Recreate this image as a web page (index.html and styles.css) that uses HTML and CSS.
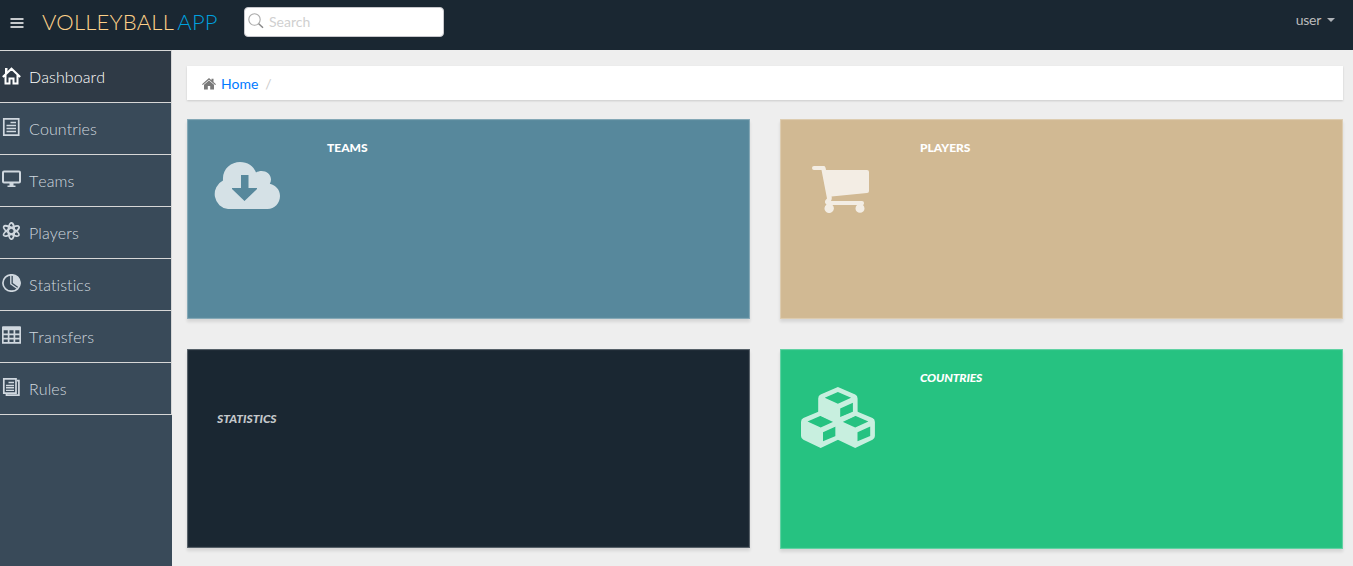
FILE: index.html
```html
<!DOCTYPE html>
<html lang="en">
<head>
<meta charset="utf-8">
<title>Volleyball App</title>
<link rel="stylesheet" href="styles.css">
</head>
<body>
<header class="header">
  <svg class="toggle" viewBox="0 0 14 10"><path d="M0.5 1h13M0.5 5h13M0.5 9h13"/></svg>
  <a class="logo">VOLLEYBALL <span class="logo-accent">APP</span></a>
  <div class="search">
    <svg class="search-icon" viewBox="0 0 16 16"><circle cx="6.500" cy="6.500" r="5.700"/><path class="handle" d="M10.700 10.700l4.300 4"/></svg>
    <span class="placeholder">Search</span>
  </div>
  <div class="user"><span class="user-name">user</span><span class="caret"></span></div>
</header>
<div class="layout">
  <nav class="sidebar">
    <ul class="menu">
      <li class="item active">
        <svg class="icon" viewBox="0 0 19 18"><path class="line thick" d="M.8 10L9.500 1.700 18.200 10M3.500 8v8.500h4v-5h4v5h4V8"/><path d="M3 1h2.500v4L3 7.500z"/></svg>
        <span>Dashboard</span></li>
      <li class="item">
        <svg class="icon" viewBox="0 0 19 18"><path class="line" d="M1.800 .9h14.900v16.200H1.800z"/><path class="line slim" d="M8.500 4.500H14M4.500 7.500H14M4.500 10.500H14M4.500 13.500H14"/></svg>
        <span>Countries</span></li>
      <li class="item">
        <svg class="icon" viewBox="0 0 19 18"><rect class="line thick" x="1" y="1.500" width="17" height="11" rx="1"/><path d="M7.500 13h4v2.500h2V17h-8v-1.500h2z"/></svg>
        <span>Teams</span></li>
      <li class="item">
        <svg class="icon" viewBox="0 0 19 18"><g class="line"><ellipse cx="9.300" cy="9" rx="3" ry="8.200"/><ellipse cx="9.300" cy="9" rx="3" ry="8.800" transform="rotate(60 9.300 9)"/><ellipse cx="9.300" cy="9" rx="3" ry="8.800" transform="rotate(-60 9.300 9)"/></g></svg>
        <span>Players</span></li>
      <li class="item">
        <svg class="icon" viewBox="0 0 19 18"><ellipse class="line" cx="9.500" cy="9" rx="8.600" ry="8.200"/><path d="M10.800 .8A8.600 8.200 0 0 1 17 13.500L10.800 9z"/><path class="line slim" d="M8.800 1v9l6.800 4.800"/></svg>
        <span>Statistics</span></li>
      <li class="item">
        <svg class="icon" viewBox="0 0 19 18"><path d="M1 .3h17a1 1 0 0 1 1 1V4.200H0V1.300a1 1 0 0 1 1-1z"/><path class="line" d="M.8 3v13.900h17.400V3M6.600 4v13M12.400 4v13M1 8.300h17M1 12.600h17"/></svg>
        <span>Transfers</span></li>
      <li class="item">
        <svg class="icon" viewBox="0 0 19 18"><path class="line" d="M1.800 .8h12.200v14.400H1.800zM15 2.700h1.900v14.500H4.500V15.500"/><path class="line slim" d="M6.500 4.500h5.500M4 7.500h8M4 9.700h8M4 12.400h8"/></svg>
        <span>Rules</span></li>
    </ul>
  </nav>
  <main class="main">
    <div class="breadcrumb">
      <svg class="home" viewBox="0 0 14 12"><path d="M7 0l2.500 2.200V.8h2v3.100L14 6.200l-.8.800L7 1.700.8 7 0 6.200z"/><path d="M7 2.500L12 6.800v4.700H8.200V8H5.800v3.500H2V6.800z"/></svg>
      <a class="crumb">Home</a><span class="slash">/</span>
    </div>
    <div class="cards">
      <section class="card teams">
        <svg class="cloud" viewBox="0 0 66 47"><path fill-rule="evenodd" d="M14 47A14.500 15 0 0 1 9 18.500C8 7 17 0 26 0c7.500 0 13.500 4 16 10.500C48 6.800 57 10 57 17.500c0 1.500-.4 3-1.200 4.200C62 23 66 28 66 34c0 7-5.500 13-12.500 13zM27 13v13h-9v1l12.500 12L43 27v-1h-8.500V13z"/></svg>
        <span class="title">Teams</span>
      </section>
      <section class="card players">
        <svg class="cart" viewBox="0 0 57 47"><path d="M2 0h10q1.500 0 2 4h41q2 0 2 2v19q0 1.800-2 2L19.500 30.500q.8 2-.5 4.500h31q2 0 2 2c0 1.300-.5 1.800-1 2a4.500 4.500 0 1 1-6 0H20.500a4.700 4.700 0 1 1-6-.5q-3.500-2.500.5-6L9.500 4H2a2 2 0 0 1 0-4z"/></svg>
        <span class="title">Players</span>
      </section>
      <section class="card statistics"><span class="title">Statistics</span></section>
      <section class="card countries">
        <svg class="cubes" viewBox="0 0 74 61">
          <defs><path id="cube" fill-rule="evenodd" d="M19.700 0L37 7.400q2.400 1.200 2.400 4v14q0 2.500-2.400 3.700L19.700 37.200 2.400 29.100Q0 27.900 0 25.400v-14q0-2.800 2.400-4zM19.700 5L6.500 10.800l13.200 6 13.200-6zM22 21.500v9L34.700 25.200V15.800z"/></defs>
          <use href="#cube" x="17.200"/><use href="#cube" x="0" y="23.700"/><use href="#cube" x="34.500" y="23.700"/>
        </svg>
        <span class="title">Countries</span>
      </section>
    </div>
  </main>
</div>
</body>
</html>
```
FILE: styles.css
```css
* { box-sizing: border-box; }
body { margin: 0; height: 566px; overflow: hidden; background: #eee; font-family: Lato, sans-serif; font-size: 14px; font-variant-ligatures: none; }
.header { height: 50px; background: #1a2732; display: flex; align-items: flex-start; padding: 0 18px 0 10px; }
.toggle { width: 14px; height: 10px; margin: 18px 18px 0 0; fill: none; stroke: #fff; stroke-width: 1.3; }
.logo { width: 202px; padding-top: 7px; font-size: 22px; line-height: 30px; font-weight: 300; color: #fed189; white-space: nowrap; letter-spacing: .2px; word-spacing: -1.5px; }
.logo-accent { color: #00a0df; }
.search { width: 200px; height: 30px; margin-top: 7px; padding-left: 3px; background: #fff; border: 1px solid #c7c7cc; border-radius: 4px; display: flex; align-items: center; gap: 5px; color: #d0d0d0; }
.search-icon { width: 16px; height: 16px; margin-top: -3px; fill: none; stroke: #aaa; stroke-width: 1.1; }
.placeholder { margin-top: -2px; }
.handle { stroke: #888; stroke-width: 1.5; }
.user { margin: 11px 0 0 auto; line-height: 17px; color: #bcbcbc; display: flex; align-items: center; }
.user-name { letter-spacing: -.3px; }
.caret { margin: 1px 0 0 6px; border: 4px solid transparent; border-top-color: #aeb2b7; border-bottom: 0; }
.layout { display: flex; height: 516px; }
.sidebar { width: 172px; background: #394a59; }
.menu { list-style: none; margin: 0; padding: 0; border-top: 1px solid #d7d7d7; border-right: 1px solid #d7d7d7; }
.item { height: 52px; border-bottom: 1px solid #d7d7d7; display: flex; align-items: center; padding: 0 0 1px 2px; gap: 8px; font-size: 16px; font-weight: 300; font-kerning: none; letter-spacing: .08px; color: #d0d8df; }
.active { background: #2f3a46; color: #fff; }
.icon { width: 19px; height: 18px; margin-top: -3px; fill: currentColor; }
.active .icon { margin-top: -1px; }
.line { fill: none; stroke: currentColor; stroke-width: 1.7; }
.thick { stroke-width: 2; }
.slim { stroke-width: 1.4; }
.main { flex: 1; padding: 16px 10px 0 15px; }
.breadcrumb { height: 34px; background: #fff; box-shadow: 0 1px 2px rgba(0,0,0,.15); padding: 1px 15px 0; display: flex; align-items: center; }
.home { width: 14px; height: 12px; margin-right: 5px; fill: #797979; }
.crumb { color: #007aff; }
.slash { margin-left: 7px; color: #ccc; }
.cards { margin-top: 19px; display: grid; grid-template-columns: 563px 563px; gap: 30px; grid-auto-rows: 200px; }
.card { display: flex; align-items: flex-start; padding: 2px; box-shadow: inset 0 0 1px 1px rgba(255,255,255,.3), 0 3px 3px rgba(0,0,0,.1); color: #fff; }
.teams { background-color: #57889c; }
.players { background-color: #d1b993; }
.statistics { height: 199px; background-color: #1a2732; color: #c4c8cb; }
.countries { background-color: #26c281; }
.title { font-size: 12px; line-height: 18px; font-weight: 900; text-transform: uppercase; margin-top: 18px; }
.statistics .title { margin: 59px 0 0 28px; font-style: italic; }
.countries .title { font-style: italic; letter-spacing: -.15px; }
.cloud, .cart, .cubes { fill: #fff; opacity: .75; flex: none; }
.cloud { width: 66px; height: 47px; margin: 41px 47px 0 25px; }
.cart { width: 57px; height: 47px; margin: 45px 51px 0 30px; }
.cubes { width: 74px; height: 61px; margin: 36px 45px 0 19px; }
```
